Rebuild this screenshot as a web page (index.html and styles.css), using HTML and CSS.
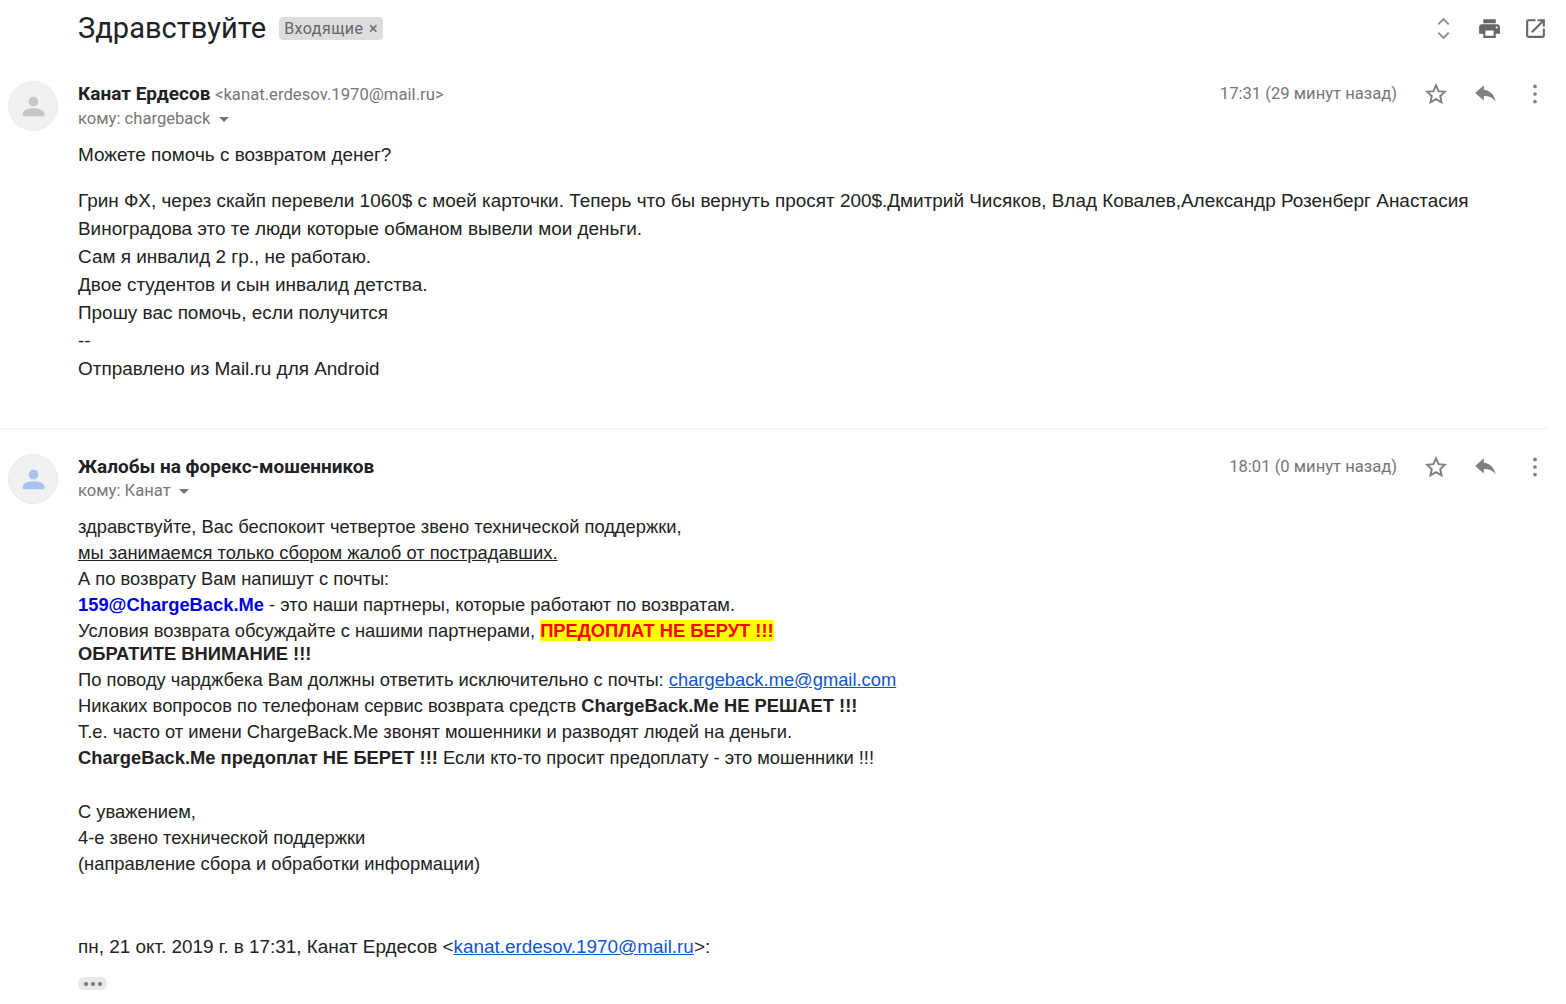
FILE: index.html
```html
<!DOCTYPE html>
<html lang="ru">
<head>
  <meta charset="utf-8" />
  <title>Здравствуйте</title>
  <link rel="stylesheet" href="styles.css">
</head>
<body>
  <main class="thread">
    <!-- subject -->
    <header class="subject">
      <h1>Здравствуйте</h1>
      <span class="label">Входящие <i>×</i></span>
      <div class="subject-tools">
        <svg class="ico" viewBox="0 0 24 24"><path d="M7 8 12 3l5 5M7 16l5 5 5-5" fill="none" stroke="#8a8a8a" stroke-width="1.800"/></svg>
        <svg class="ico" viewBox="0 0 24 24"><path fill="#666" d="M19 8H5a3 3 0 0 0-3 3v6h4v4h12v-4h4v-6a3 3 0 0 0-3-3zm-3 11H8v-5h8v5zm3-7a1 1 0 1 1 0-2 1 1 0 0 1 0 2zM18 3H6v4h12V3z"/></svg>
        <svg class="ico" viewBox="0 0 24 24"><path fill="#666" d="M19 19H5V5h7V3H5a2 2 0 0 0-2 2v14a2 2 0 0 0 2 2h14a2 2 0 0 0 2-2v-7h-2v7zM14 3v2h3.600l-9.800 9.800 1.400 1.400L19 6.400V10h2V3h-7z"/></svg>
      </div>
    </header>

    <!-- 1: question -->
    <article class="msg msg-first">
      <div class="avatar">
        <svg viewBox="0 0 24 24"><circle cx="12" cy="8" r="4" fill="#c4c7ca"/><path fill="#c4c7ca" d="M3 20v-2c0-3 5-4.500 9-4.500s9 1.500 9 4.500v2z"/></svg>
      </div>
      <div class="msg-main">
        <div class="msg-head">
          <div class="who">
            <div class="from"><b>Канат Ердесов</b> <span>&lt;kanat.erdesov.1970@mail.ru&gt;</span></div>
            <div class="to">кому: chargeback <em class="caret"></em></div>
          </div>
          <div class="when">17:31 (29 минут назад)</div>
          <div class="msg-tools">
            <svg class="ico" viewBox="0 0 24 24"><path fill="none" stroke="#808080" stroke-width="1.800" d="m12 4 2.400 5.400 5.800.6-4.300 3.900 1.200 5.700-5.100-2.900-5.100 2.900 1.200-5.700L3.800 10l5.800-.6z"/></svg>
            <svg class="ico" viewBox="0 0 24 24"><path fill="#808080" d="M10 8V4l-8 7 8 7v-4.100c5 0 8.500 1.600 11 5.100-1-5-4-10-11-11z"/></svg>
            <svg class="ico" viewBox="0 0 24 24"><circle cx="12" cy="5" r="1.700" fill="#808080"/><circle cx="12" cy="12" r="1.700" fill="#808080"/><circle cx="12" cy="19" r="1.700" fill="#808080"/></svg>
          </div>
        </div>
        <div class="body body-plain">
          <p class="lead">Можете помочь с возвратом денег?</p>
          <p>Грин ФХ, через скайп перевели 1060$ с моей карточки. Теперь что бы вернуть просят 200$.Дмитрий Чисяков, Влад Ковалев,Александр Розенберг Анастасия<br>
          Виноградова это те люди которые обманом вывели мои деньги.<br>
          Сам я инвалид 2 гр., не работаю.<br>
          Двое студентов и сын инвалид детства.<br>
          Прошу вас помочь, если получится<br>
          --<br>
          Отправлено из Mail.ru для Android</p>
        </div>
      </div>
    </article>

    <!-- 2: reply -->
    <article class="msg msg-second">
      <div class="avatar">
        <svg viewBox="0 0 24 24"><circle cx="12" cy="8" r="4" fill="#a8c3ee"/><path fill="#a8c3ee" d="M3 20v-2c0-3 5-4.500 9-4.500s9 1.500 9 4.500v2z"/></svg>
      </div>
      <div class="msg-main">
        <div class="msg-head">
          <div class="who">
            <div class="from"><b>Жалобы на форекс-мошенников</b></div>
            <div class="to">кому: Канат <em class="caret"></em></div>
          </div>
          <div class="when">18:01 (0 минут назад)</div>
          <div class="msg-tools">
            <svg class="ico" viewBox="0 0 24 24"><path fill="none" stroke="#808080" stroke-width="1.800" d="m12 4 2.400 5.400 5.800.6-4.300 3.900 1.200 5.700-5.100-2.900-5.100 2.900 1.200-5.700L3.800 10l5.800-.6z"/></svg>
            <svg class="ico" viewBox="0 0 24 24"><path fill="#808080" d="M10 8V4l-8 7 8 7v-4.100c5 0 8.500 1.600 11 5.100-1-5-4-10-11-11z"/></svg>
            <svg class="ico" viewBox="0 0 24 24"><circle cx="12" cy="5" r="1.700" fill="#808080"/><circle cx="12" cy="12" r="1.700" fill="#808080"/><circle cx="12" cy="19" r="1.700" fill="#808080"/></svg>
          </div>
        </div>
        <div class="body body-html">
          <div>здравствуйте, Вас беспокоит четвертое звено технической поддержки,</div>
          <div><u>мы занимаемся только сбором жалоб от пострадавших.</u></div>
          <div>А по возврату Вам напишут с почты:</div>
          <div><b class="blue">159@ChargeBack.Me</b> - это наши партнеры, которые работают по возвратам.</div>
          <div>Условия возврата обсуждайте с нашими партнерами, <b class="warn">ПРЕДОПЛАТ НЕ БЕРУТ !!!</b></div>
          <div class="tight"><b>ОБРАТИТЕ ВНИМАНИЕ !!!</b></div>
          <div>По поводу чарджбека Вам должны ответить исключительно с почты: <a href="#">chargeback.me@gmail.com</a></div>
          <div>Никаких вопросов по телефонам сервис возврата средств <b>ChargeBack.Me НЕ РЕШАЕТ !!!</b></div>
          <div>Т.е. часто от имени ChargeBack.Me звонят мошенники и разводят людей на деньги.</div>
          <div><b>ChargeBack.Me предоплат НЕ БЕРЕТ !!!</b> Если кто-то просит предоплату - это мошенники !!!</div>
          <div class="sign">С уважением,</div>
          <div>4-е звено технической поддержки</div>
          <div>(направление сбора и обработки информации)</div>
          <div class="quote-line">пн, 21 окт. 2019 г. в 17:31, Канат Ердесов &lt;<a href="#">kanat.erdesov.1970@mail.ru</a>&gt;:</div>
          <div class="more"><i></i><i></i><i></i></div>
        </div>
      </div>
    </article>
  </main>
</body>
</html>
```

FILE: styles.css
```css
*,*::before,*::after{box-sizing:border-box;margin:0;padding:0;}

html,body{height:1004px;overflow:hidden;}
body{background:#fff;color:#222;font-family:"Liberation Sans",Arial,sans-serif;}

.thread{width:1547px;}

.ico{width:26px;height:26px;display:block;}

/* subject row */
.subject{display:flex;align-items:center;height:56px;padding-left:78px;}
.subject h1{font:400 29px/36px Roboto,sans-serif;letter-spacing:.05px;color:#202124;}
.label{
  margin-left:13px;padding:0 5px;height:23px;
  background:#dddddd;border-radius:4px;
  font:16px/23px Roboto,sans-serif;letter-spacing:.45px;color:#666;
}
.label i{font-style:normal;margin-left:1px;}
.subject-tools{margin-left:auto;display:flex;gap:21px;margin-right:-1px;}
.subject-tools .ico{width:25px;height:25px;}

/* message */
.msg{display:flex;}
.msg-first{margin-top:25px;height:348px;border-bottom:1px solid #eeeeee;}
.msg-second{margin-top:25px;}

.avatar{
  flex:none;width:50px;height:50px;margin-left:8px;margin-right:20px;
  border-radius:50%;background:#f1f1f1;border:1px solid #ececec;
  display:flex;align-items:center;justify-content:center;
}
.avatar svg{width:29px;height:29px;}

.msg-main{flex:1;min-width:0;}
.msg-head{display:flex;align-items:flex-start;height:50px;}
.who{flex:1;padding-top:1px;}
.from{font:18px/24px Roboto,sans-serif;color:#777;}
.from b{color:#202124;font-weight:700;font-size:19px;}
.from span{font-size:16.700px;}
.to{font:16.600px/24px Roboto,sans-serif;color:#777;}
.caret{display:inline-block;margin-left:4px;vertical-align:middle;border:5px solid transparent;border-top-color:#777;border-bottom:0;}
.when{font:16.600px/25px Roboto,sans-serif;color:#777;margin-right:26px;}
.msg-tools{display:flex;gap:24px;margin-right:-1px;}
.msg-tools .ico:last-child{margin-left:-1px;}

.body{color:#222;}
.body-plain{font-size:18.930px;line-height:28px;}
.lead{margin-top:10px;margin-bottom:18px;}
.body-html{margin-top:10px;font-size:18.330px;line-height:26px;}
.tight{margin-top:-3px;}
.blue{color:#0000e0;}
.warn{background:#ffff00;color:#ff0000;}
a{color:#1155cc;}
.sign{margin-top:28px;}
.quote-line{margin-top:57px;font-size:18.900px;}
.more{margin-top:17px;display:flex;gap:3px;align-items:center;justify-content:center;width:29px;height:13px;background:#e8e8e8;border-radius:6px;}
.more i{width:4px;height:4px;border-radius:50%;background:#777;}
```
